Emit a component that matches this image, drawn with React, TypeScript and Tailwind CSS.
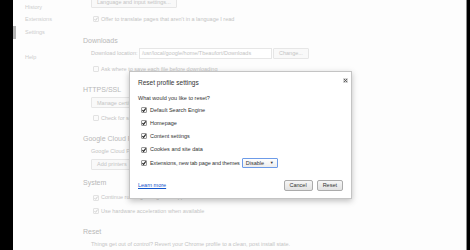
import { ReactNode } from "react"

const font = { fontFamily: '"Liberation Sans", Arial, sans-serif' }

const FadedCheck = () => (
  <svg width="6" height="6" viewBox="0 0 6 6" className="shrink-0">
    <rect x="0.5" y="0.5" width="5" height="5" rx="0.5" fill="#fbfbfb" stroke="#e2e2e2" />
    <path d="M1.5 3.2 L2.6 4.3 L4.6 1.6" fill="none" stroke="#c9c9c9" strokeWidth="0.9" />
  </svg>
)

const EmptyCheck = () => (
  <svg width="6" height="6" viewBox="0 0 6 6" className="shrink-0">
    <rect x="0.5" y="0.5" width="5" height="5" rx="0.5" fill="#fbfbfb" stroke="#e2e2e2" />
  </svg>
)

const DarkCheck = () => (
  <svg width="6" height="6" viewBox="0 0 6 6" className="shrink-0">
    <rect x="0.5" y="0.5" width="5" height="5" rx="0.5" fill="#fafafa" stroke="#9a9a9a" />
    <path d="M1.4 3.1 L2.6 4.4 L4.8 1.4" fill="none" stroke="#222" strokeWidth="1.1" />
  </svg>
)

const FadedButton = ({ children }: { children: ReactNode }) => (
  <div className="flex h-[11px] items-center rounded-[1px] border border-[#e6e6e6] bg-[#f9f9f9] px-[5px] text-[5.5px] text-[#c4c4c4]">
    {children}
  </div>
)

const Heading = ({ children, className = "" }: { children: ReactNode; className?: string }) => (
  <div className={`flex h-[12px] items-center text-[7px] text-[#b8b8b8] ${className}`}>{children}</div>
)

const CheckRow = ({ children, className = "", checked = true }: { children: ReactNode; className?: string; checked?: boolean }) => (
  <div className={`flex h-[12px] items-center gap-[2px] pl-[10px] text-[5.5px] text-[#c4c4c4] ${className}`}>
    {checked ? <FadedCheck /> : <EmptyCheck />}
    <span>{children}</span>
  </div>
)

const DialogButton = ({ children }: { children: ReactNode }) => (
  <div className="flex h-[11px] items-center justify-center rounded-[2px] border border-[#ababab] bg-gradient-to-b from-[#f6f6f6] to-[#e2e2e2] px-[5px] text-[5.5px] text-[#333]">
    {children}
  </div>
)

const resetItems = [
  "Default Search Engine",
  "Homepage",
  "Content settings",
  "Cookies and site data",
]

export default function App() {
  return (
    <div className="relative flex h-[250px] w-[470px] overflow-hidden bg-[#fdfdfd]" style={font}>
      <div className="w-[13px] shrink-0 bg-black" />

      {/* side nav */}
      <nav className="flex w-[70px] shrink-0 flex-col text-[5.5px] text-[#cdcdcd]">
        <div className="mt-[1px] flex h-[12px] items-center pl-[12px]">History</div>
        <div className="flex h-[13px] items-center pl-[12px]">Extensions</div>
        <div className="flex h-[13px] items-center border-l-[3px] border-[#b5b5b5] pl-[9px]">Settings</div>
        <div className="mt-[12px] flex h-[12px] items-center pl-[12px]">Help</div>
      </nav>

      {/* settings page behind the dialog */}
      <main className="flex flex-1 flex-col">
        <div className="mt-[-3px] flex pl-[8px]">
          <FadedButton>Language and input settings...</FadedButton>
        </div>
        <CheckRow className="mt-[5px]">Offer to translate pages that aren't in a language I read</CheckRow>

        <Heading className="mt-[10px]">Downloads</Heading>
        <div className="mt-[1px] flex h-[12px] items-center pl-[8px] text-[5.5px] text-[#c4c4c4]">
          <span className="w-[48px]">Download location:</span>
          <div className="flex h-[11px] w-[133px] items-center border border-[#e6e6e6] bg-white px-[2px]">
            /usr/local/google/home/Tbeaufort/Downloads
          </div>
          <div className="ml-[1px]">
            <FadedButton>Change...</FadedButton>
          </div>
        </div>
        <CheckRow className="mt-[4px]" checked={false}>
          Ask where to save each file before downloading
        </CheckRow>

        <Heading className="mt-[9px]">HTTPS/SSL</Heading>
        <div className="mt-[1px] flex pl-[8px]">
          <FadedButton>Manage certificates...</FadedButton>
        </div>
        <CheckRow className="mt-[4px]" checked={false}>
          Check for server certificate revocation
        </CheckRow>

        <Heading className="mt-[9px]">Google Cloud Print</Heading>
        <div className="flex h-[12px] items-center pl-[8px] text-[5.5px] text-[#c4c4c4]">
          Google Cloud Print lets you access this computer's printers from anywhere.
        </div>
        <div className="mt-[2px] flex pl-[8px]">
          <FadedButton>Add printers</FadedButton>
        </div>

        <Heading className="mt-[8px]">System</Heading>
        <CheckRow className="mt-[2px]">Continue running background apps when Chromium is closed</CheckRow>
        <CheckRow className="mt-[2px]">Use hardware acceleration when available</CheckRow>

        <Heading className="mt-[9px]">Reset</Heading>
        <div className="flex h-[12px] items-center pl-[8px] text-[5.5px] text-[#c4c4c4]">
          Things get out of control? Revert your Chrome profile to a clean, post install state.
        </div>
      </main>

      <div className="w-[4px] shrink-0 border-l border-[#8a8a8a] bg-black" />

      {/* modal dialog */}
      <div className="absolute left-[129px] top-[71px] flex h-[128px] w-[223px] flex-col border border-[#c4c4c4] bg-white px-[8px] pb-[7px] pt-[6px] shadow-[0_2px_6px_rgba(0,0,0,0.25)]">
        <div className="absolute right-[3px] top-[6px] flex h-[5px] w-[5px] items-center justify-center">
          <svg width="5" height="5" viewBox="0 0 5 5">
            <rect x="0" y="0" width="5" height="5" fill="#d6d6d6" />
            <path d="M1 1 L4 4 M4 1 L1 4" stroke="#555" strokeWidth="0.9" />
          </svg>
        </div>
        <div className="flex h-[9px] items-center text-[6.5px] text-[#333]">Reset profile settings</div>
        <div className="mt-[7px] flex h-[8px] items-center text-[5.5px] text-[#333]">
          What would you like to reset?
        </div>
        <div className="mt-[1px] flex flex-col pl-[3px] text-[5.5px] text-[#333]">
          {resetItems.map((item) => (
            <div key={item} className="flex h-[13.3px] items-center gap-[3px]">
              <DarkCheck />
              <span>{item}</span>
            </div>
          ))}
          <div className="flex h-[13.3px] items-center gap-[3px]">
            <DarkCheck />
            <span className="tracking-[-0.1px]">Extensions, new tab page and themes</span>
            <div className="ml-[-1px] flex h-[10px] w-[36px] items-center justify-between rounded-[1px] border border-[#6d9be8] bg-gradient-to-b from-white to-[#ededed] pl-[3px] pr-[3px]">
              <span>Disable</span>
              <span className="text-[4px] text-[#333]">▼</span>
            </div>
          </div>
        </div>
        <div className="mt-auto flex h-[11px] items-center">
          <span className="text-[5.5px] text-[#1155cc] underline">Learn more</span>
          <div className="ml-auto flex gap-[4px]">
            <DialogButton>Cancel</DialogButton>
            <DialogButton>Reset</DialogButton>
          </div>
        </div>
      </div>
    </div>
  )
}
